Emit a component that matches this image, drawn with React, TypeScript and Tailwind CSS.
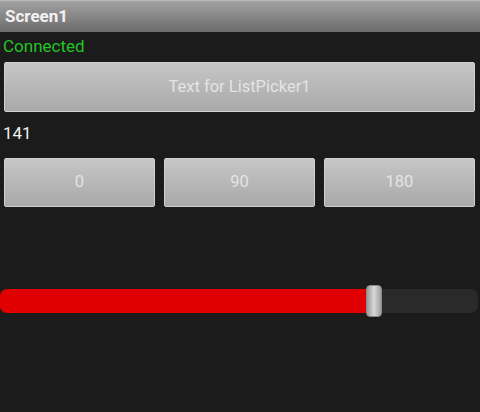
import React from "react";

const font = { fontFamily: "Roboto, 'Liberation Sans', sans-serif" };

const GrayButton = ({ label, className = "" }: { label: string; className?: string }) => (
  <div
    className={`flex items-center justify-center bg-gradient-to-b from-[#c6c6c6] to-[#a9a9a9] border border-[#d0d0d0] rounded-[2px] text-[#e4e4e4] text-[16.5px] ${className}`}
  >
    {label}
  </div>
);

const App = () => {
  const value = 141;
  const percent = (372 / 480) * 100;

  return (
    <div className="w-[480px] h-[412px] bg-[#1b1b1b] flex flex-col overflow-hidden" style={font}>
      <div className="h-8 flex items-center px-[5px] bg-gradient-to-b from-[#a2a2a2] to-[#6c6c6c] border-t border-[#b8b8b8]">
        <span className="text-[17px] font-bold text-[#f2f2f2]">Screen1</span>
      </div>

      <div className="h-7 flex items-center pl-[3px] pt-[1px] text-[17px] text-[#22c522]">Connected</div>

      <GrayButton label="Text for ListPicker1" className="mt-[2px] ml-1 mr-[5px] h-[50px]" />

      <div className="mt-[10px] h-6 flex items-center pl-[3px] text-[17px] text-[#f0f0f0]">{value}</div>

      <div className="mt-3 ml-1 mr-[5px] grid grid-cols-3 gap-[9px]">
        <GrayButton label="0" className="h-[49px]" />
        <GrayButton label="90" className="h-[49px]" />
        <GrayButton label="180" className="h-[49px]" />
      </div>

      <div className="mt-[78px] relative h-8 flex items-center">
        <div className="w-full h-6 pr-[2px] flex">
          <div className="h-full bg-[#e00000] rounded-l-[7px]" style={{ width: `${percent}%` }} />
          <div className="flex-1 h-full bg-[#2a2a2a] rounded-r-[8px]" />
        </div>
        <div className="absolute left-[366px] top-0 w-4 h-8 rounded-[4px] border border-[#8a8a8a] bg-gradient-to-r from-[#9a9a9a] via-[#d8d8d8] to-[#a0a0a0]" />
      </div>
    </div>
  );
};

export default App;
